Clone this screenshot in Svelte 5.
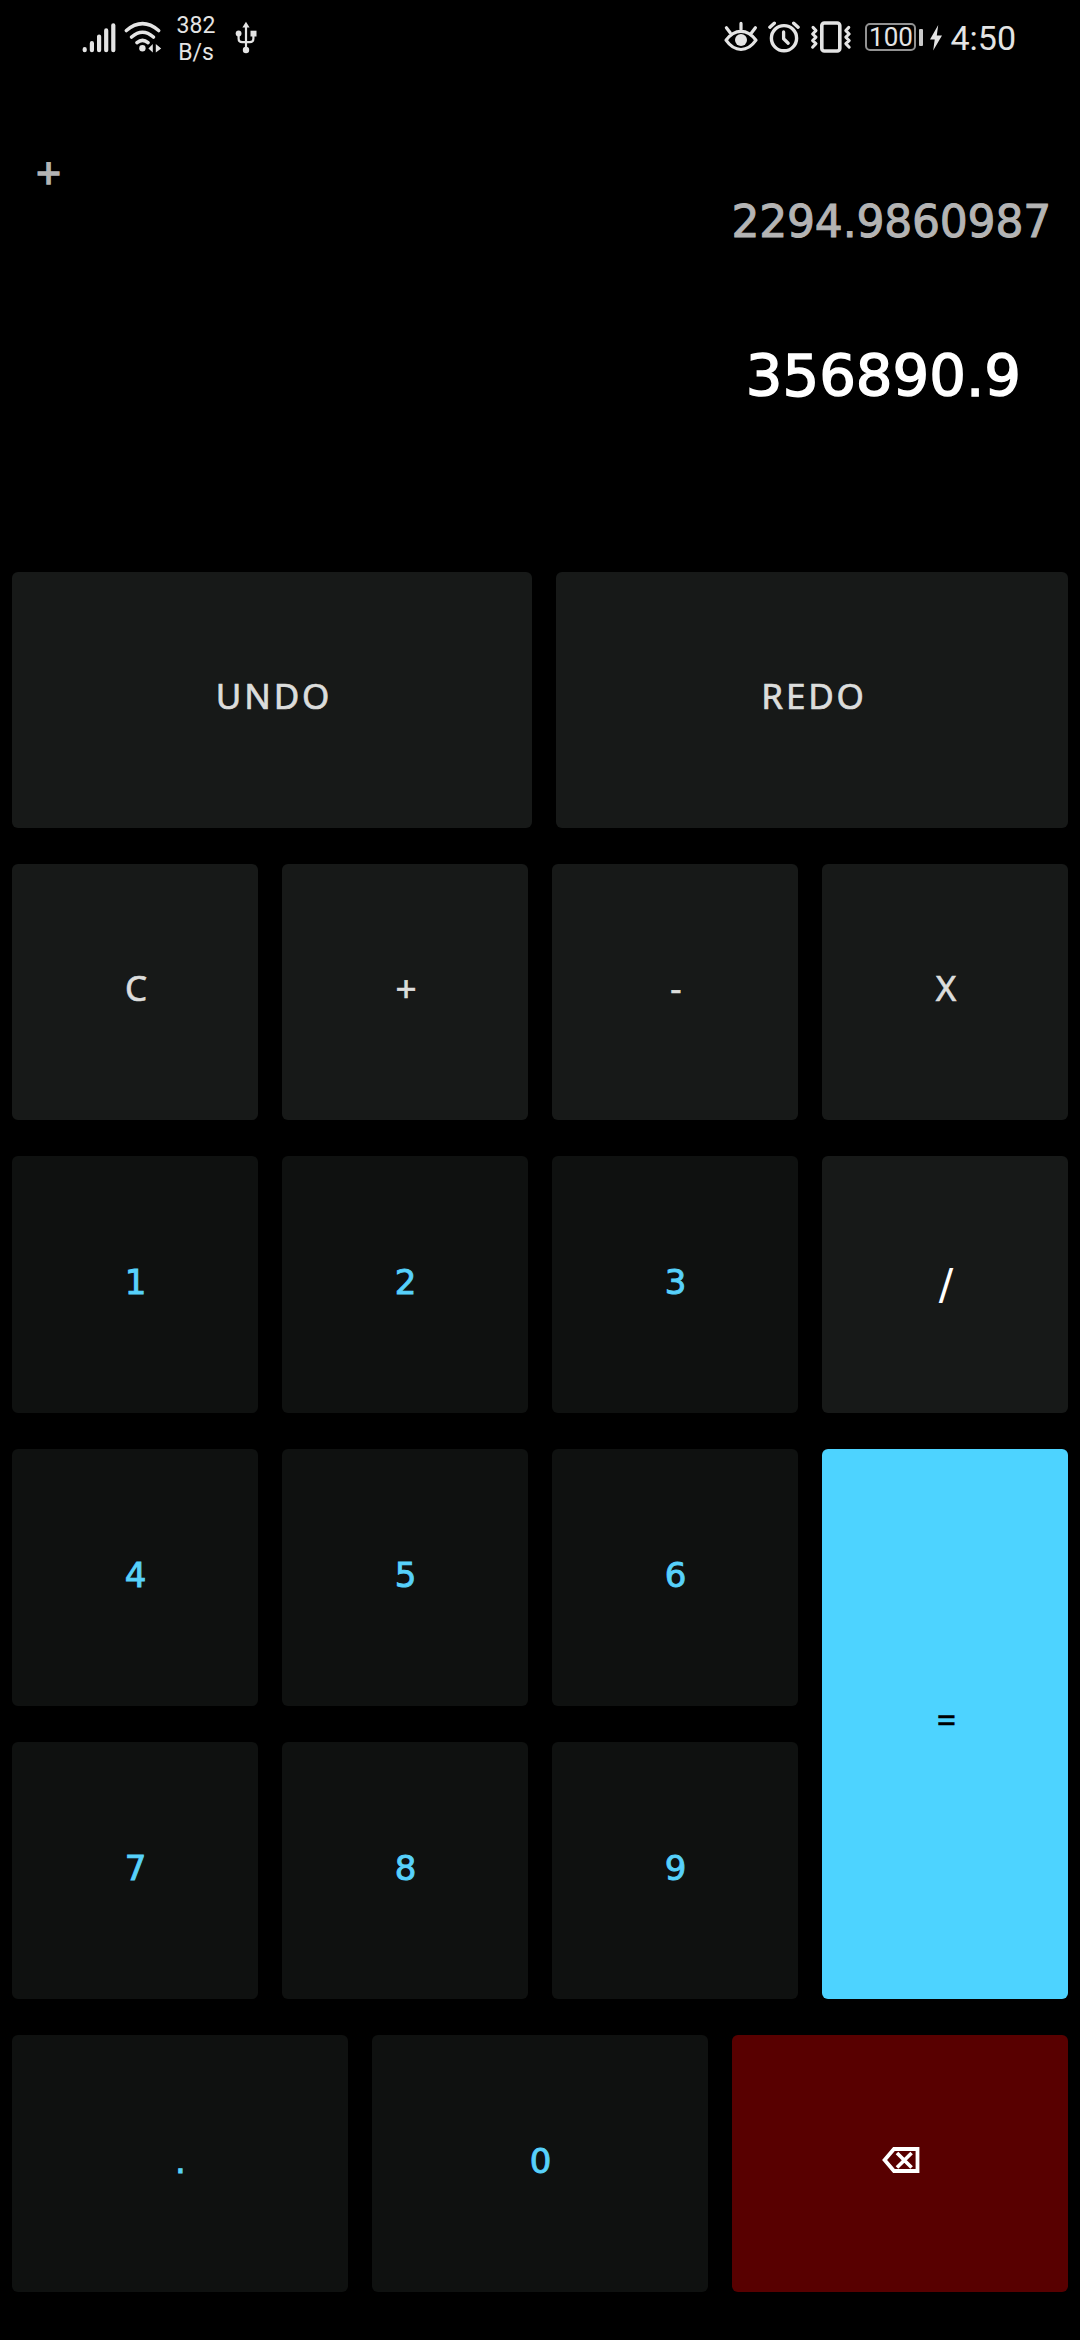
<script lang="ts">
  type Key = { label: string; area: string; kind?: string };

  const keys: Key[] = [
    { label: 'UNDO', area: 'undo', kind: 'op word' },
    { label: 'REDO', area: 'redo', kind: 'op word' },
    { label: 'C', area: 'clear', kind: 'op' },
    { label: '+', area: 'plus', kind: 'op math' },
    { label: '-', area: 'minus', kind: 'op' },
    { label: 'X', area: 'times', kind: 'op' },
    { label: '1', area: 'n1' },
    { label: '2', area: 'n2' },
    { label: '3', area: 'n3' },
    { label: '/', area: 'divide', kind: 'op slash' },
    { label: '4', area: 'n4' },
    { label: '5', area: 'n5' },
    { label: '6', area: 'n6' },
    { label: '=', area: 'equals', kind: 'math' },
    { label: '7', area: 'n7' },
    { label: '8', area: 'n8' },
    { label: '9', area: 'n9' }
  ];

  const previous = '2294.9860987';
  const current = '356890.9';
</script>

<main class="phone">
  <header class="status">
    <svg class="signal" width="34" height="32" viewBox="0 0 34 32" fill="none" stroke="#e4e4e4" stroke-width="4.2" stroke-linecap="round">
      <path d="M2.7 27.2v1M9.9 21.2v7M17.1 14.6v13.6M24.2 8.4v19.8M31.3 3.3v24.9" />
    </svg>
    <svg class="wifi" width="38" height="32" viewBox="0 0 38 32" fill="none" stroke="#e4e4e4" stroke-width="3.6" stroke-linecap="round">
      <path d="M2.4 9.5Q18.5-4.2 34.6 9.5M7.6 16Q18.5 6.5 29.4 16M13 21.6Q18.5 17.2 24 21.6" />
      <circle cx="18.4" cy="27.3" r="3.2" fill="#e4e4e4" stroke="none" />
      <path d="M28.8 23v8.6L24.4 27.4zM31.8 23v8.6L37.2 27.4z" fill="#e4e4e4" stroke="none" />
    </svg>
    <div class="speed"><span>382</span><span>B/s</span></div>
    <svg class="usb" width="22" height="34" viewBox="0 0 22 34" fill="none" stroke="#e4e4e4" stroke-width="2.2">
      <path d="M11 5v24M3.6 13v4.5q0 3.6 3.6 3.6h7.6q3.6 0 3.6-3.6V12" />
      <path d="M11 .8l3.6 5.8H7.4z" fill="#e4e4e4" stroke="none" />
      <circle cx="3.6" cy="12.5" r="2.9" fill="#e4e4e4" stroke="none" />
      <path d="M15.5 9.7h6v5.8h-6z" fill="#e4e4e4" stroke="none" />
      <circle cx="11" cy="29" r="3.2" fill="#e4e4e4" stroke="none" />
    </svg>

    <div class="right">
      <svg class="eye" width="34" height="32" viewBox="0 0 34 32" fill="none" stroke="#e4e4e4" stroke-width="3.2" stroke-linecap="round">
        <path d="M2 19.2Q8.5 10.3 17 10.3T32 19.2Q25.5 28.5 17 28.5T2 19.2zM17 2.4v6M2.4 6.8l3.8 5M31.4 6.8l-3.8 5" stroke-linejoin="round" />
        <circle cx="17" cy="19" r="6" fill="#e4e4e4" stroke="none" />
      </svg>
      <svg class="alarm" width="32" height="32" viewBox="0 0 32 32" fill="none" stroke="#e4e4e4" stroke-width="3.4" stroke-linecap="round">
        <circle cx="16" cy="17.2" r="12.6" />
        <path d="M1.9 6.2l4.4-4M30.1 6.2l-4.4-4" />
        <path d="M15.6 11v6.8l4.6 4.4" stroke-width="3.3" stroke-linejoin="round" />
      </svg>
      <svg class="vibrate" width="42" height="32" viewBox="0 0 42 32" fill="none" stroke="#e4e4e4" stroke-width="3.6" stroke-linecap="round" stroke-linejoin="round">
        <rect x="11.8" y="2" width="18" height="28" rx="2.6" />
        <path d="M3 6.4l3 3.2-3.4 3.4L6 16.2l-3.4 3.4L6 22.6l-3.4 3.6M38.8 6.4l-3 3.2 3.4 3.4-3.4 3.2 3.4 3.4-3.4 3 3.4 3.6" stroke-width="3" />
      </svg>
      <div class="battery">100</div>
      <i class="cap"></i>
      <svg class="bolt" width="12" height="26" viewBox="0 0 12 26" fill="#e4e4e4"><path d="M8.2 0L0 14.6h4.7L3.2 25.6 12 10.4H6.8z" /></svg>
      <time>4:50</time>
    </div>
  </header>

  <section class="display">
    <div class="pending">+</div>
    <div class="previous">{previous}</div>
    <div class="current">{current}</div>
  </section>

  <section class="keypad">
    {#each keys as key}
      <button class="key {key.kind ?? 'digit'} {key.area}"><span>{key.label}</span></button>
    {/each}
    <button class="key digit point"><span>.</span></button>
    <button class="key digit n0"><span>0</span></button>
    <button class="key back" aria-label="Backspace">
      <svg width="38" height="26" viewBox="0 0 38 26" fill="none" stroke="#fff">
        <path d="M12 2h23.5v22H12L2.6 13z" stroke-width="3.8" />
        <path d="M15 6l14.6 14.5M29.6 6L15 20.5" stroke-width="3.6" />
      </svg>
    </button>
  </section>
</main>

<style>
  :global(body) {
    margin: 0;
    background: #000;
  }

  .phone {
    box-sizing: border-box;
    width: 1080px;
    height: 2340px;
    display: flex;
    flex-direction: column;
    overflow: hidden;
    background: #000;
    font-family: 'DejaVu Sans', sans-serif;
  }

  .status {
    box-sizing: border-box;
    height: 76px;
    padding: 0 64px 0 82px;
    display: flex;
    align-items: flex-start;
    color: #e4e4e4;
    font-family: Roboto, sans-serif;
  }
  .status svg {
    flex: none;
    display: block;
  }
  .signal { margin-top: 22px; }
  .wifi { margin: 21px 0 0 8px; }
  .speed {
    width: 44px;
    margin: 12px 0 0 12px;
    display: flex;
    flex-direction: column;
    align-items: center;
    font-size: 23px;
    line-height: 27px;
  }
  .usb { margin: 21px 0 0 17px; }
  .right {
    margin-left: auto;
    display: flex;
    align-items: flex-start;
  }
  .eye { margin-top: 21px; }
  .alarm { margin: 21px 0 0 10px; }
  .vibrate { margin: 21px 0 0 10px; }
  .battery {
    box-sizing: border-box;
    width: 51px;
    height: 28px;
    margin: 23px 0 0 13px;
    border: 2px solid #929292;
    border-radius: 5px;
    text-align: center;
    font-size: 26px;
    line-height: 25px;
  }
  .cap {
    width: 4px;
    height: 17px;
    margin: 29px 0 0 3px;
    border-radius: 1px;
    background: #c8c8c8;
  }
  .bolt { margin: 25px 0 0 7px; }
  time {
    margin: 18px 0 0 8px;
    font-size: 34px;
    line-height: 40px;
  }

  .display {
    box-sizing: border-box;
    height: 496px;
    display: flex;
    flex-direction: column;
  }
  .pending {
    height: 118px;
    padding: 68px 0 0 36px;
    box-sizing: border-box;
    color: #b4b4b4;
    font-family: 'Noto Sans', sans-serif;
    font-size: 44px;
    line-height: 56px;
    -webkit-text-stroke: 1.4px currentColor;
  }
  .previous {
    padding-right: 29px;
    text-align: right;
    color: #b4b4b4;
    font-size: 44px;
    line-height: 56px;
    letter-spacing: -0.2px;
    -webkit-text-stroke: 1px currentColor;
  }
  .current {
    margin-top: 86px;
    padding-right: 59px;
    text-align: right;
    color: #fff;
    font-size: 57.7px;
    line-height: 80px;
    -webkit-text-stroke: 1.5px currentColor;
  }

  .keypad {
    display: grid;
    padding: 0 12px;
    grid-template-columns: repeat(12, 1fr);
    grid-template-rows: 256px 256px 257px 257px 257px 257px;
    column-gap: 24px;
    row-gap: 36px;
  }
  .key {
    display: flex;
    align-items: center;
    justify-content: center;
    grid-column: span 3;
    margin: 0;
    padding: 0 0 6px 1px;
    border: 0;
    border-radius: 6px;
    background: #0f1110;
    color: #57d1fb;
    font-family: 'DejaVu Sans', sans-serif;
    font-size: 34px;
    line-height: 40px;
    -webkit-text-stroke: 0.9px currentColor;
  }
  .op {
    padding: 0 0 9px 2px;
    background: #171918;
    color: #dcdddc;
    font-family: 'Noto Sans', sans-serif;
    font-size: 35px;
    -webkit-text-stroke-width: 0.7px;
  }
  .word {
    grid-column: span 6;
    letter-spacing: 2.8px;
    padding-left: 4px;
  }
  .undo { margin-right: -4px; }
  .redo { margin-left: 4px; }
  .math {
    font-family: 'Noto Sans', sans-serif;
    font-size: 37px;
  }
  .slash {
    padding: 0 0 2px 2px;
    color: #fff;
    font-family: 'DejaVu Sans', sans-serif;
    font-size: 43px;
    -webkit-text-stroke-width: 0;
  }
  .equals {
    grid-row: 4 / span 2;
    grid-column: 10 / span 3;
    padding: 0 0 8px 3px;
    background: #4dd3ff;
    color: #000;
    font-size: 34px;
    -webkit-text-stroke-width: 0.6px;
  }
  .point,
  .n0,
  .back {
    grid-column: span 4;
  }
  .back {
    background: #580000;
    padding-bottom: 7px;
  }
</style>
